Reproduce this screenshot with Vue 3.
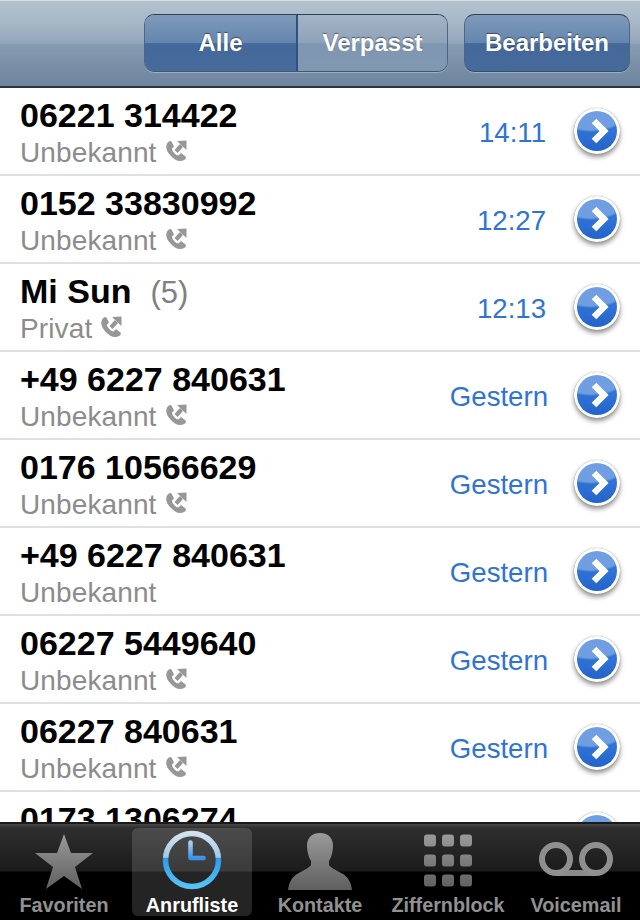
<script setup>
const calls = [
  { name: '06221 314422', type: 'Unbekannt', when: '14:11', phone: true, time: true },
  { name: '0152 33830992', type: 'Unbekannt', when: '12:27', phone: true, time: true },
  { name: 'Mi Sun', count: '(5)', type: 'Privat', when: '12:13', phone: true, time: true },
  { name: '+49 6227 840631', type: 'Unbekannt', when: 'Gestern', phone: true },
  { name: '0176 10566629', type: 'Unbekannt', when: 'Gestern', phone: true },
  { name: '+49 6227 840631', type: 'Unbekannt', when: 'Gestern', phone: false },
  { name: '06227 5449640', type: 'Unbekannt', when: 'Gestern', phone: true },
  { name: '06227 840631', type: 'Unbekannt', when: 'Gestern', phone: true },
  { name: '0173 1306274', type: 'Unbekannt', when: 'Gestern', phone: true }
]
</script>

<template>
  <div class="screen">
    <header class="navbar">
      <div class="segments">
        <button class="segment segment--on" type="button">Alle</button>
        <button class="segment" type="button">Verpasst</button>
      </div>
      <button class="edit" type="button">Bearbeiten</button>
    </header>

    <ul class="calls">
      <li v-for="(call, i) in calls" :key="i" class="call">
        <div class="call-text">
          <div class="call-name">
            <span>{{ call.name }}</span>
            <span v-if="call.count" class="call-count">{{ call.count }}</span>
          </div>
          <div class="call-type">
            <span>{{ call.type }}</span>
            <svg v-if="call.phone" class="phone" viewBox="0 0 22 22" width="22" height="22">
              <path d="M1.500 5 C0.500 8 2 11.500 5 15 C8.500 19 12.500 21.500 16 21 C18.500 20.600 20.500 19.500 21 18 L20.500 16.500 L16 13 L13.500 15.500 C10.500 15 7.500 11.500 6.800 9 L9 6.500 L6.500 1.500 L5 1 C3.500 1.500 2 3 1.500 5 Z" fill="#979797" />
              <path d="M11 11.500 L16.500 5.500" fill="none" stroke="#979797" stroke-width="4.200" />
              <path d="M12 1 L21.500 0.500 L21.500 10 Z" fill="#979797" />
            </svg>
          </div>
        </div>
        <span class="call-when" :class="{ 'call-when--time': call.time }">{{ call.when }}</span>
        <span class="go">
          <span class="go-disc">
            <svg viewBox="0 0 40 40" width="40" height="40">
              <path d="M17 10 L27 20 L17 30" fill="none" stroke="#fff" stroke-width="6.500" />
            </svg>
          </span>
        </span>
      </li>
    </ul>

    <nav class="tabbar">
      <div class="tab">
        <svg viewBox="0 0 60 58" width="60" height="58">
          <defs>
            <linearGradient id="grey" x1="0" y1="0" x2="0" y2="1">
              <stop offset="0" stop-color="#9a9a9a" />
              <stop offset="1" stop-color="#5f5f5f" />
            </linearGradient>
          </defs>
          <path d="M30 2 L37 21 L59 21 L41 35 L48 57 L30 44 L12 57 L19 35 L1 21 L23 21 Z" fill="url(#grey)" />
        </svg>
        <span class="tab-label">Favoriten</span>
      </div>
      <div class="tab tab--on">
        <svg viewBox="0 0 60 60" width="60" height="60">
          <defs>
            <linearGradient id="ring" x1="0" y1="0" x2="0" y2="1">
              <stop offset="0" stop-color="#d4e3f0" />
              <stop offset="0.45" stop-color="#a4c9e8" />
              <stop offset="0.46" stop-color="#2c9ae8" />
              <stop offset="1" stop-color="#55c2f6" />
            </linearGradient>
            <linearGradient id="hand" x1="0" y1="0" x2="0" y2="1">
              <stop offset="0" stop-color="#a9cdf0" />
              <stop offset="1" stop-color="#3b93e8" />
            </linearGradient>
          </defs>
          <circle cx="30" cy="30" r="26.500" fill="none" stroke="url(#ring)" stroke-width="5.500" />
          <path d="M28.500 12.500 L28.500 28 L41.500 28" fill="none" stroke="url(#hand)" stroke-width="4.600" stroke-linecap="round" stroke-linejoin="round" />
        </svg>
        <span class="tab-label">Anrufliste</span>
      </div>
      <div class="tab">
        <svg viewBox="0 0 64 58" width="64" height="58">
          <path d="M32 1 C41 1 45.500 7 45 15 C44.700 21 43 26 41 29 L41 33 C43 36 50 39 55 42 C60 45 63 50 64 58 L0 58 C1 50 4 45 9 42 C14 39 21 36 23 33 L23 29 C21 26 19.300 21 19 15 C18.500 7 23 1 32 1 Z" fill="url(#grey)" />
        </svg>
        <span class="tab-label">Kontakte</span>
      </div>
      <div class="tab">
        <svg viewBox="0 0 48 53" width="48" height="58">
          <defs>
            <linearGradient id="grey2" gradientUnits="userSpaceOnUse" x1="0" y1="0" x2="0" y2="53">
              <stop offset="0" stop-color="#9a9a9a" />
              <stop offset="1" stop-color="#5f5f5f" />
            </linearGradient>
          </defs>
          <g fill="url(#grey2)">
            <rect v-for="n in 9" :key="n" :x="((n - 1) % 3) * 18" :y="Math.floor((n - 1) / 3) * 20" width="12" height="12" rx="3" />
          </g>
        </svg>
        <span class="tab-label">Ziffernblock</span>
      </div>
      <div class="tab">
        <svg class="vm" viewBox="0 0 74 34" width="74" height="34">
          <path d="M17 31 L57 31" stroke="#8a8a8a" stroke-width="6" />
          <circle cx="17" cy="17" r="14" fill="none" stroke="#8f8f8f" stroke-width="6" />
          <circle cx="57" cy="17" r="14" fill="none" stroke="#8f8f8f" stroke-width="6" />
        </svg>
        <span class="tab-label">Voicemail</span>
      </div>
    </nav>
  </div>
</template>

<style scoped>
.screen {
  width: 640px;
  height: 920px;
  display: flex;
  flex-direction: column;
  overflow: hidden;
  background: #fff;
  font-family: "Liberation Sans", Arial, sans-serif;
}

.navbar {
  flex: none;
  height: 88px;
  box-sizing: border-box;
  display: flex;
  align-items: flex-start;
  justify-content: flex-end;
  gap: 16px;
  padding: 14px 10px 0 0;
  background: linear-gradient(#b4c2cf, #a8b8c7 25%, #93a6ba 50%, #879bb1 51%, #6f849f);
  border-top: 1px solid #d8dfe5;
  border-bottom: 2px solid #2d3540;
}

.segments {
  display: flex;
  width: 304px;
  height: 58px;
  margin-top: -1px;
  box-sizing: border-box;
  border: 1px solid #4c6685;
  border-top-color: #2f3e52;
  border-bottom-color: #3d5878;
  border-radius: 10px;
  overflow: hidden;
  box-shadow: 0 1px 0 rgba(255, 255, 255, 0.3);
}

.segment,
.edit {
  margin: 0;
  padding: 0;
  border: 0;
  color: #fff;
  font: bold 24px "Liberation Sans", Arial, sans-serif;
  text-shadow: 0 -1px 1px rgba(0, 0, 0, 0.45);
}

.segment {
  width: 149px;
  background: linear-gradient(#a4b3c5, #8fa2b9 50%, #7f96b1 51%, #8198b3);
}

.segment--on {
  width: 153px;
  border-right: 2px solid #2f5080;
  background: linear-gradient(#7f9abb, #6485ad 50%, #44689a 51%, #466a9a);
}

.edit {
  width: 166px;
  height: 58px;
  margin-top: -1px;
  box-sizing: border-box;
  border: 1px solid #4c6685;
  border-top-color: #2f3e52;
  border-bottom-color: #344d70;
  border-radius: 10px;
  background: linear-gradient(#7f9abb, #6485ad 50%, #44689a 51%, #466a9a);
  box-shadow: 0 1px 0 rgba(255, 255, 255, 0.3);
}

.calls {
  flex: 1;
  min-height: 0;
  margin: 0;
  padding: 0;
  list-style: none;
  overflow: hidden;
}

.call {
  height: 88px;
  box-sizing: border-box;
  display: flex;
  align-items: center;
  padding: 0 20px 0 20px;
  border-bottom: 2px solid #e0e0e0;
}

.call-text {
  flex: 1;
  min-width: 0;
  margin-top: 4px;
}

.call-name {
  display: flex;
  align-items: baseline;
  gap: 19px;
  height: 38px;
  line-height: 38px;
  font-size: 34px;
  font-weight: bold;
  color: #000;
}

.call-count {
  font-size: 31px;
  font-weight: normal;
  color: #808080;
}

.call-type {
  display: flex;
  align-items: center;
  gap: 8px;
  height: 34px;
  margin-top: 2px;
  font-size: 28px;
  line-height: 34px;
  letter-spacing: 0.12px;
  color: #8c8c8c;
}

.phone {
  margin-top: -4px;
}

.call-when {
  margin-top: 3px;
  margin-right: 26px;
  font-size: 27.6px;
  color: #2f74d0;
}

.call-when--time {
  margin-right: 28px;
}

.go {
  flex: none;
  width: 46px;
  height: 46px;
  margin-top: -1px;
  display: flex;
  align-items: center;
  justify-content: center;
  border-radius: 50%;
  background: #fff;
  box-shadow: 0 3px 5px rgba(0, 0, 0, 0.45), 0 0 1px rgba(0, 0, 0, 0.4);
}

.go-disc {
  display: block;
  width: 40px;
  height: 40px;
  border-radius: 50%;
  background:
    radial-gradient(ellipse 36px 19px at 14px 2px, #6f9fe2 0 88%, rgba(111, 159, 226, 0) 100%),
    linear-gradient(#3f80dc, #2264cc);
}

.go-disc svg {
  display: block;
}

.tabbar {
  flex: none;
  height: 98px;
  box-sizing: border-box;
  display: flex;
  border-top: 2px solid #1a1a1a;
  background: linear-gradient(#474747, #2e2e2e 4px, #1b1b1b 49%, #000 50%, #000);
}

.tab {
  flex: 1;
  margin: 4px;
  display: flex;
  flex-direction: column;
  align-items: center;
  justify-content: flex-end;
  border-radius: 6px;
  color: #919191;
}

.tab--on {
  color: #fff;
  background: rgba(255, 255, 255, 0.14);
}

.tab-label {
  height: 26px;
  line-height: 30px;
  font-size: 19.8px;
  font-weight: bold;
  white-space: nowrap;
}

.vm {
  margin: 10px 0 14px;
}
</style>
